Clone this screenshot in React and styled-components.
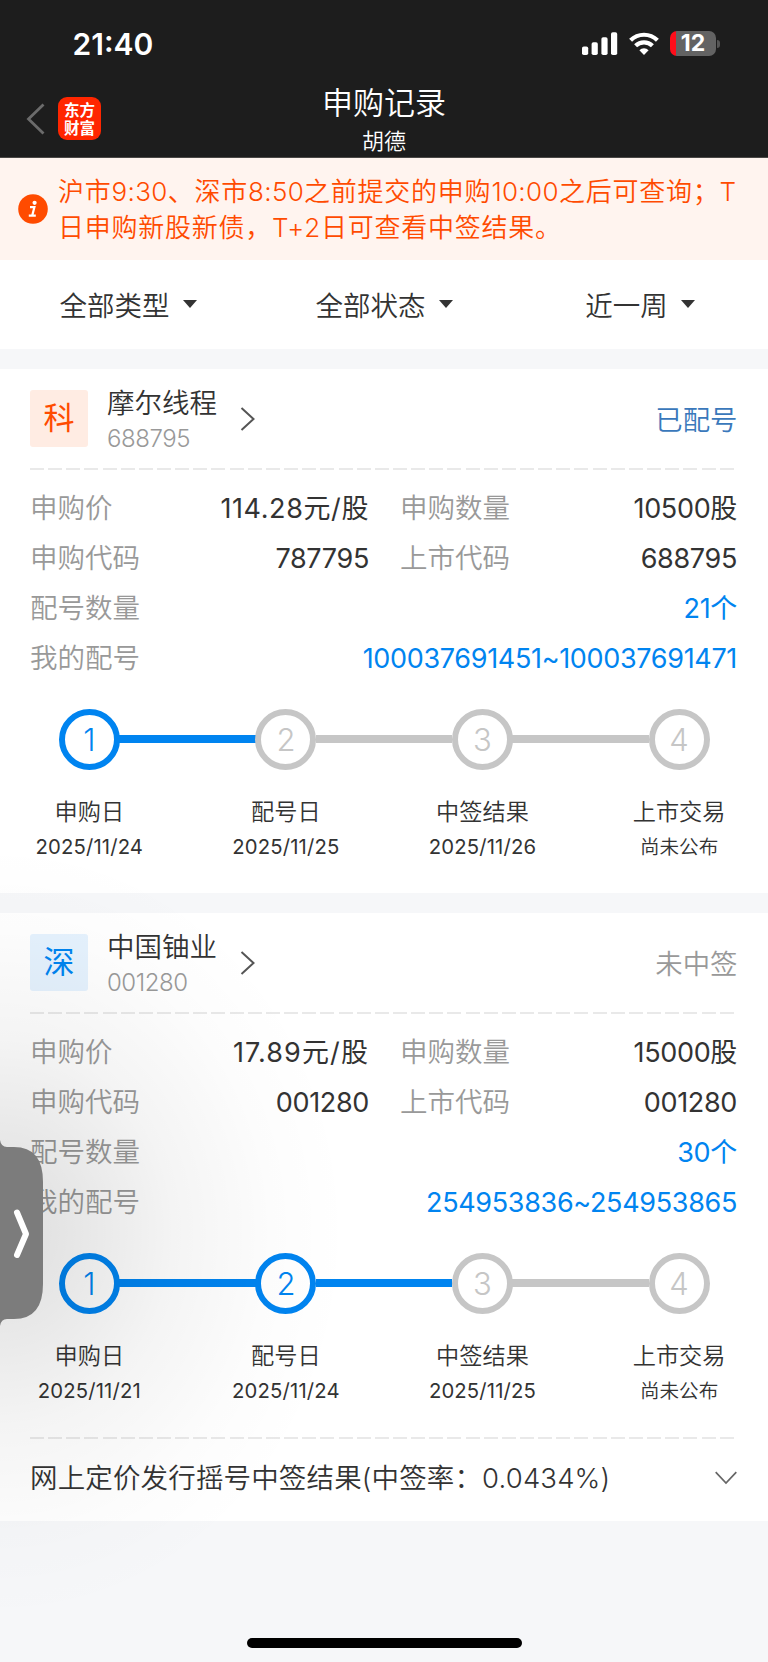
import React from "react";
import styled, { createGlobalStyle } from "styled-components";

const GlobalStyle = createGlobalStyle`
  * { box-sizing: border-box; }
  body {
    margin: 0;
    background: #f6f7f9;
    font-family: Inter, "Noto Sans CJK SC", sans-serif;
    font-weight: 350;
    color: #333;
  }
`;

const Screen = styled.div`
  position: relative;
  width: 768px;
  height: 1662px;
  overflow: hidden;
  background: #f6f7f9;
  white-space: nowrap;
`;

const Header = styled.header`
  height: 158px;
  background: #1d1d1d;
  color: #fff;
  border-bottom: 1px solid #4a4846;
`;

const StatusBar = styled.div`
  height: 87px;
  padding: 0 48px 0 72.5px;
  display: flex;
  align-items: center;
  justify-content: space-between;
`;

const Clock = styled.div`
  font-size: 30px;
  font-weight: 600;
`;

const StatusIcons = styled.div`
  display: flex;
  align-items: center;
  gap: 11px;
`;

const Battery = styled.div`
  display: flex;
  align-items: center;
  gap: 1px;
`;

const BatteryBody = styled.div`
  width: 46px;
  height: 25px;
  border-radius: 7px;
  background: linear-gradient(90deg, #ff0d1a 6px, #636363 6px);
  font-size: 23px;
  font-weight: 650;
  line-height: 25px;
  text-align: center;
`;

const BatteryNub = styled.div`
  width: 3px;
  height: 8px;
  border-radius: 0 3px 3px 0;
  background: #555;
`;

const NavBar = styled.div`
  height: 70px;
  padding: 0 26px;
  display: grid;
  grid-template-columns: 1fr auto 1fr;
`;

const NavLeft = styled.div`
  display: flex;
  align-items: flex-start;
  gap: 13px;
  padding-top: 10px;
  svg { margin-top: 6px; }
`;

const Brand = styled.div`
  width: 43px;
  height: 43px;
  border-radius: 9px;
  background: #ff2600;
  padding-top: 3px;
  font-family: "Noto Sans CJK SC", sans-serif;
  font-size: 15.5px;
  font-weight: 700;
  line-height: 18px;
  text-align: center;
`;

const Titles = styled.div`
  text-align: center;
`;

const Title = styled.h1`
  margin: 0;
  font-size: 31px;
  font-weight: 350;
  line-height: 32px;
`;

const Subtitle = styled.div`
  margin-top: 9px;
  font-size: 22px;
  line-height: 26px;
`;

const Notice = styled.div`
  height: 102px;
  padding: 0 0 0 18px;
  background: #fff4ef;
  display: flex;
  align-items: center;
  gap: 10px;
  color: #ff4b00;
`;

const NoticeText = styled.div`
  padding-top: 2px;
  font-size: 26px;
  line-height: 36px;
  letter-spacing: 0.75px;
`;

const Time = styled.span`
  letter-spacing: 0.35px;
`;

const Filters = styled.div`
  height: 89px;
  padding-bottom: 1px;
  background: #fff;
  display: grid;
  grid-template-columns: repeat(3, 1fr);
`;

const Filter = styled.div`
  display: flex;
  align-items: center;
  justify-content: center;
  gap: 13px;
  font-size: 27.5px;
`;

const Caret = styled.span`
  border: 7.5px solid transparent;
  border-top: 8.5px solid #333;
  border-bottom: 0;
`;

const Card = styled.section`
  height: ${(p) => p.$height}px;
  margin-top: 20px;
  padding: 0 32px 0 30px;
  background: #fff;
`;

const CardHead = styled.div`
  height: 99px;
  display: flex;
  align-items: center;
`;

const Badge = styled.div`
  width: 58px;
  height: 57px;
  border-radius: 3px;
  background: ${(p) => p.$bg};
  color: ${(p) => p.$color};
  font-size: 31px;
  font-weight: 400;
  line-height: 56px;
  text-align: center;
`;

const Names = styled.div`
  padding-top: 4px;
  margin: 0 23px 0 19px;
`;

const StockName = styled.div`
  font-size: 27.5px;
  line-height: 36px;
`;

const StockCode = styled.div`
  font-size: 24px;
  line-height: 35px;
  letter-spacing: -0.45px;
  color: #999;
`;

const Status = styled.div`
  margin: 0 -1.5px 2px auto;
  font-size: 27.4px;
  color: ${(p) => p.$color};
`;

const Dashes = styled.div`
  height: 2px;
  margin: ${(p) => (p.$top ?? 0)}px 0 0;
  background: repeating-linear-gradient(90deg, #e9e9e9 0 14px, transparent 14px 18.15px);
`;

const Details = styled.div`
  padding-top: 12.5px;
`;

const DetailRow = styled.div`
  height: 50.2px;
  display: grid;
  grid-template-columns: ${(p) => (p.$split ? "338px 1fr" : "1fr")};
  column-gap: 32px;
`;

const Detail = styled.div`
  display: flex;
  align-items: baseline;
  justify-content: space-between;
  line-height: 50px;
`;

const Label = styled.span`
  font-size: 27.5px;
  color: #999;
`;

const Value = styled.span`
  font-size: 27px;
  font-weight: 400;
  letter-spacing: ${(p) => p.$spacing ?? -0.33}px;
  margin-right: -1px;
  color: ${(p) => (p.$link ? "#0084f0" : "#333")};
`;

const Steps = styled.div`
  margin: 25.5px -3px 0 -39px;
  display: grid;
  grid-template-columns: repeat(4, 196.6px);
`;

const Step = styled.div`
  display: flex;
  flex-direction: column;
  align-items: center;
`;

const Track = styled.div`
  width: 100%;
  display: flex;
  align-items: center;
`;

const Bar = styled.div`
  flex: 1;
  height: 8px;
  background: ${(p) => (p.$tone === "on" ? "#0084f0" : p.$tone === "off" ? "#c6c6c6" : "transparent")};
`;

const Circle = styled.div`
  width: 61px;
  height: 61px;
  margin: 0 -0.5px;
  border-radius: 50%;
  border: 6px solid ${(p) => (p.$on ? "#0084f0" : "#c6c6c6")};
  background: #fff;
  color: ${(p) => (p.$on ? "#0084f0" : "#c6c6c6")};
  font-size: 31px;
  font-weight: 300;
  line-height: 49px;
  text-align: center;
`;

const StepName = styled.div`
  margin-top: 24px;
  font-size: 23.2px;
  line-height: 36px;
`;

const StepDate = styled.div`
  font-size: ${(p) => (p.$cjk ? 19.6 : 20.3)}px;
  font-weight: ${(p) => (p.$cjk ? 350 : 400)};
  line-height: 34px;
  letter-spacing: ${(p) => (p.$cjk ? 0 : 0.15)}px;
`;

const ResultRow = styled.div`
  height: 75px;
  display: flex;
  align-items: center;
  justify-content: space-between;
  font-size: 27.5px;
  letter-spacing: 0.15px;
  svg { margin: 3px -1px 0 0; }
`;

const Shade = styled.div`
  position: absolute;
  left: 0;
  top: 842px;
  width: 350px;
  height: 780px;
  pointer-events: none;
  background: radial-gradient(
    ellipse 350px 390px at 0 50%,
    rgba(0, 0, 0, 0.135) 0%,
    rgba(0, 0, 0, 0.09) 25%,
    rgba(0, 0, 0, 0.045) 50%,
    rgba(0, 0, 0, 0.012) 78%,
    transparent 100%
  );
`;

const Handle = styled.div`
  position: absolute;
  left: 0;
  top: 1140px;
  width: 44px;
  height: 186px;
  svg { display: block; }
`;

const HomeBar = styled.div`
  position: absolute;
  left: 247px;
  bottom: 14px;
  width: 275px;
  height: 10px;
  border-radius: 5px;
  background: #000;
`;

const records = [
  {
    badge: "科", badgeBg: "#ffece3", badgeColor: "#ff4b00",
    name: "摩尔线程", code: "688795", status: "已配号", statusColor: "#3a78bb",
    price: "114.28元/股", priceSpacing: 0.6, amount: "10500股", buyCode: "787795", listCode: "688795",
    count: "21个", numbers: "100037691451~100037691471", done: 1,
    dates: ["2025/11/24", "2025/11/25", "2025/11/26", "尚未公布"],
    height: 524,
  },
  {
    badge: "深", badgeBg: "#e5f2fe", badgeColor: "#0084f0",
    name: "中国铀业", code: "001280", status: "未中签", statusColor: "#999",
    price: "17.89元/股", priceSpacing: 1.1, amount: "15000股", buyCode: "001280", listCode: "001280",
    count: "30个", numbers: "254953836~254953865", done: 2,
    dates: ["2025/11/21", "2025/11/24", "2025/11/25", "尚未公布"],
    height: 608,
    result: "网上定价发行摇号中签结果(中签率：0.0434%)",
  },
];

const stepNames = ["申购日", "配号日", "中签结果", "上市交易"];

function SignalIcon() {
  return (
    <svg width="36" height="24" viewBox="0 0 36 24" fill="#fff">
      <rect x="0" y="14.5" width="6.2" height="8.5" rx="1.8" />
      <rect x="9.6" y="10.3" width="6.2" height="12.7" rx="1.8" />
      <rect x="19.4" y="5.3" width="6.2" height="17.7" rx="1.8" />
      <rect x="29" y="0.3" width="6.2" height="22.7" rx="1.8" />
    </svg>
  );
}

function WifiIcon() {
  return (
    <svg width="30" height="24" viewBox="0 0 30 24" fill="none" stroke="#fff" strokeWidth="4.2">
      <path d="M1.6 8.2a19.2 19.2 0 0 1 26.8 0" />
      <path d="M6.6 13.8a12 12 0 0 1 16.8 0" />
      <path d="M15 23l-4.6-4.8a6.6 6.6 0 0 1 9.2 0z" fill="#fff" stroke="none" />
    </svg>
  );
}

function InfoIcon() {
  return (
    <svg width="30" height="30" viewBox="0 0 30 30">
      <circle cx="15" cy="15" r="14.8" fill="#ff4b00" />
      <circle cx="16.6" cy="8.8" r="2.1" fill="#fff" />
      <path d="M12 13.2h4.4l-2.2 8.4M10.8 21.7h7" fill="none" stroke="#fff" strokeWidth="2.2" />
    </svg>
  );
}

function Stepper({ done, dates }) {
  const tone = (on) => (on ? "on" : "off");
  return (
    <Steps>
      {stepNames.map((name, i) => (
        <Step key={name}>
          <Track>
            <Bar $tone={i === 0 ? "none" : tone(i <= done)} />
            <Circle $on={i < done}>{i + 1}</Circle>
            <Bar $tone={i === 3 ? "none" : tone(i < done)} />
          </Track>
          <StepName>{name}</StepName>
          <StepDate $cjk={i === 3}>{dates[i]}</StepDate>
        </Step>
      ))}
    </Steps>
  );
}

function RecordCard({ r }) {
  return (
    <Card $height={r.height}>
      <CardHead>
        <Badge $bg={r.badgeBg} $color={r.badgeColor}>{r.badge}</Badge>
        <Names>
          <StockName>{r.name}</StockName>
          <StockCode>{r.code}</StockCode>
        </Names>
        <svg width="16" height="26" viewBox="0 0 16 26" fill="none" stroke="#555" strokeWidth="2">
          <path d="M1.5 2l12 11-12 11" />
        </svg>
        <Status $color={r.statusColor}>{r.status}</Status>
      </CardHead>
      <Dashes />
      <Details>
        <DetailRow $split>
          <Detail><Label>申购价</Label><Value $spacing={r.priceSpacing}>{r.price}</Value></Detail>
          <Detail><Label>申购数量</Label><Value>{r.amount}</Value></Detail>
        </DetailRow>
        <DetailRow $split>
          <Detail><Label>申购代码</Label><Value>{r.buyCode}</Value></Detail>
          <Detail><Label>上市代码</Label><Value>{r.listCode}</Value></Detail>
        </DetailRow>
        <DetailRow>
          <Detail><Label>配号数量</Label><Value $link>{r.count}</Value></Detail>
        </DetailRow>
        <DetailRow>
          <Detail><Label>我的配号</Label><Value $link>{r.numbers}</Value></Detail>
        </DetailRow>
      </Details>
      <Stepper done={r.done} dates={r.dates} />
      {r.result && (
        <>
          <Dashes $top={29} />
          <ResultRow>
            <span>{r.result}</span>
            <svg width="22" height="14" viewBox="0 0 22 14" fill="none" stroke="#666" strokeWidth="1.7">
              <path d="M0.7 1.2L11 12 21.3 1.2" />
            </svg>
          </ResultRow>
        </>
      )}
    </Card>
  );
}

export default function App() {
  return (
    <Screen>
      <GlobalStyle />
      <Header>
        <StatusBar>
          <Clock>21:40</Clock>
          <StatusIcons>
            <SignalIcon />
            <WifiIcon />
            <Battery><BatteryBody>12</BatteryBody><BatteryNub /></Battery>
          </StatusIcons>
        </StatusBar>
        <NavBar>
          <NavLeft>
            <svg width="19" height="32" viewBox="0 0 19 32" fill="none" stroke="#6b6b6b" strokeWidth="2.8">
              <path d="M17.5 1.5L2.5 16l15 14.5" />
            </svg>
            <Brand>东方<br />财富</Brand>
          </NavLeft>
          <Titles>
            <Title>申购记录</Title>
            <Subtitle>胡德</Subtitle>
          </Titles>
        </NavBar>
      </Header>
      <Notice>
        <InfoIcon />
        <NoticeText>
          <div>沪市<Time>9:30</Time>、深市<Time>8:50</Time>之前提交的申购<Time>10:00</Time>之后可查询；T</div>
          <div>日申购新股新债，T+2日可查看中签结果。</div>
        </NoticeText>
      </Notice>
      <Filters>
        {["全部类型", "全部状态", "近一周"].map((f) => (
          <Filter key={f}>{f}<Caret /></Filter>
        ))}
      </Filters>
      {records.map((r) => <RecordCard key={r.code} r={r} />)}
      <Shade />
      <Handle>
        <svg width="44" height="186" viewBox="0 0 44 186">
          <path d="M0 0Q1 7 7 7H14Q43 7 43 42V144Q43 179 14 179H7Q1 179 0 186Z" fill="#7c7c7c" />
          <path d="M17 72.5L26 94 17 115" fill="none" stroke="#fff" strokeWidth="6" strokeLinecap="round" strokeLinejoin="round" />
        </svg>
      </Handle>
      <HomeBar />
    </Screen>
  );
}
